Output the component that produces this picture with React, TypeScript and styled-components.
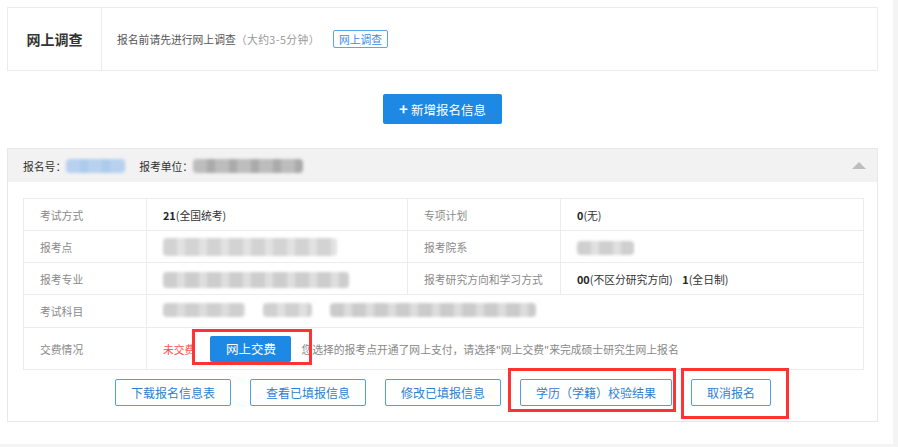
import React from "react";
import styled, { createGlobalStyle } from "styled-components";

const GlobalStyle = createGlobalStyle`
  html, body { margin: 0; padding: 0; background: #f4f4f4; }
  body {
    font-family: "Microsoft YaHei", "Noto Sans CJK SC", "Noto Sans", sans-serif;
    font-size: 10.8px;
    color: #333;
  }
  * { box-sizing: border-box; }
`;

const Page = styled.div`
  width: 893px;
  height: 444px;
  background: #fff;
  padding: 7px 15px 0 7px;
  display: flex;
  flex-direction: column;
`;

const SurveyCard = styled.div`
  height: 64px;
  border: 1px solid #ebebeb;
  display: flex;
`;

const SurveyTitle = styled.div`
  width: 94px;
  border-right: 1px solid #ebebeb;
  display: flex;
  align-items: center;
  justify-content: center;
  font-size: 14px;
  font-weight: bold;
  color: #333;
`;

const SurveyBody = styled.div`
  flex: 1;
  display: flex;
  align-items: center;
  padding-left: 15px;
  color: #555;
`;

const Muted = styled.span`
  color: #999;
  margin-right: 13px;
  letter-spacing: 0.4px;
`;

const OutlineTag = styled.button`
  height: 18px;
  padding: 0 5px;
  font: inherit;
  font-size: 10.8px;
  color: #3a8ee6;
  background: #fff;
  border: 1px solid #5aa5ec;
  border-radius: 2px;
  line-height: 16px;
`;

const AddRow = styled.div`
  display: flex;
  justify-content: center;
  margin-top: 23px;
`;

const AddButton = styled.button`
  width: 119px;
  height: 30px;
  border: none;
  border-radius: 2px;
  background: #1e88e5;
  color: #fff;
  font: inherit;
  font-size: 12.5px;
  display: flex;
  align-items: center;
  justify-content: center;
  gap: 3px;
`;

const Plus = styled.span`
  font-size: 15px;
  font-weight: bold;
  line-height: 1;
  margin-top: -2px;
`;

const Section = styled.div`
  margin-top: 24px;
  border: 1px solid #e8e8e8;
`;

const SectionHeader = styled.div`
  height: 33px;
  background: #f2f2f2;
  display: flex;
  align-items: center;
  padding: 0 11px 0 15px;
  color: #333;
`;

const HeaderLabel = styled.span``;

const HeaderGap = styled.span`
  width: 14px;
`;

const Caret = styled.span`
  margin-left: auto;
  width: 0;
  height: 0;
  border-left: 7px solid transparent;
  border-right: 7px solid transparent;
  border-bottom: 7px solid #bdbdbd;
`;

const Blur = styled.span<{ $w: number; $h?: number; $c: string; $c2?: string }>`
  display: inline-block;
  width: ${(p) => p.$w}px;
  height: ${(p) => p.$h ?? 14}px;
  border-radius: 4px;
  background: repeating-linear-gradient(
    90deg,
    ${(p) => p.$c} 0px,
    ${(p) => p.$c} 14px,
    ${(p) => p.$c2 ?? p.$c} 14px,
    ${(p) => p.$c2 ?? p.$c} 22px
  );
  filter: blur(1.4px);
  vertical-align: middle;
`;

const BlurGroup = styled.span`
  display: inline-flex;
  align-items: center;
  gap: 18px;
`;

const SectionBody = styled.div`
  padding: 16px 14px 15px 15px;
`;

const Table = styled.table`
  width: 840px;
  border-collapse: collapse;
  table-layout: fixed;
`;

const Cell = styled.td<{ $label?: boolean; $h: number }>`
  border: 1px solid #ececec;
  height: ${(p) => p.$h}px;
  padding: 0 16px;
  color: ${(p) => (p.$label ? "#8a8a8a" : "#333")};
  vertical-align: middle;
  white-space: nowrap;
`;

const Num = styled.b`
  font-weight: bold;
  color: #222;
`;

const PayLine = styled.div`
  display: flex;
  align-items: center;
`;

const Unpaid = styled.span`
  color: #ff4d4d;
  margin-right: 15px;
`;

const Marked = styled.span`
  position: relative;
  display: inline-flex;
`;

const Mark = styled.span<{ $t: number; $l: number; $r: number; $b: number }>`
  position: absolute;
  top: ${(p) => p.$t}px;
  left: ${(p) => p.$l}px;
  right: ${(p) => p.$r}px;
  bottom: ${(p) => p.$b}px;
  border: 3px solid #f33;
  pointer-events: none;
`;

const PayButton = styled.button`
  width: 81px;
  height: 26px;
  border: none;
  border-radius: 2px;
  background: #1e88e5;
  color: #fff;
  font: inherit;
  font-size: 12.5px;
`;

const Note = styled.span`
  color: #888;
  margin-left: 10px;
`;

const Actions = styled.div`
  margin-top: 9px;
  display: flex;
  justify-content: center;
  gap: 19px;
`;

const ActionButton = styled.button`
  height: 27px;
  padding: 0 15px;
  background: #fff;
  border: 1px solid #4f9fe8;
  border-radius: 2px;
  color: #2e80d1;
  font: inherit;
  font-size: 12px;
  white-space: nowrap;
`;

export default function App() {
  return (
    <>
      <GlobalStyle />
      <Page>
        <SurveyCard>
          <SurveyTitle>网上调查</SurveyTitle>
          <SurveyBody>
            报名前请先进行网上调查<Muted>（大约3-5分钟）</Muted>
            <OutlineTag>网上调查</OutlineTag>
          </SurveyBody>
        </SurveyCard>

        <AddRow>
          <AddButton>
            <Plus>+</Plus>新增报名信息
          </AddButton>
        </AddRow>

        <Section>
          <SectionHeader>
            <HeaderLabel>报名号：</HeaderLabel>
            <Blur $w={59} $c="#b7d1ef" $c2="#aecbec" />
            <HeaderGap />
            <HeaderLabel>报考单位：</HeaderLabel>
            <Blur $w={110} $c="#bdbdbd" $c2="#aaaaaa" />
            <Caret />
          </SectionHeader>
          <SectionBody>
            <Table>
              <colgroup>
                <col style={{ width: 123 }} />
                <col style={{ width: 261 }} />
                <col style={{ width: 153 }} />
                <col style={{ width: 303 }} />
              </colgroup>
              <tbody>
                <tr>
                  <Cell $label $h={32}>考试方式</Cell>
                  <Cell $h={32}>
                    <Num>21</Num>(全国统考)
                  </Cell>
                  <Cell $label $h={32}>专项计划</Cell>
                  <Cell $h={32}>
                    <Num>0</Num>(无)
                  </Cell>
                </tr>
                <tr>
                  <Cell $label $h={32}>报考点</Cell>
                  <Cell $h={32}>
                    <Blur $w={174} $h={18} $c="#d3d3d3" $c2="#e2e2e2" />
                  </Cell>
                  <Cell $label $h={32}>报考院系</Cell>
                  <Cell $h={32}>
                    <Blur $w={57} $c="#cfcfcf" $c2="#e0e0e0" />
                  </Cell>
                </tr>
                <tr>
                  <Cell $label $h={32}>报考专业</Cell>
                  <Cell $h={32}>
                    <Blur $w={186} $h={16} $c="#cdcdcd" $c2="#dedede" />
                  </Cell>
                  <Cell $label $h={32}>报考研究方向和学习方式</Cell>
                  <Cell $h={32}>
                    <Num>00</Num>(不区分研究方向)&nbsp;&nbsp;&nbsp;&nbsp;<Num>1</Num>(全日制)
                  </Cell>
                </tr>
                <tr>
                  <Cell $label $h={33}>考试科目</Cell>
                  <Cell $h={33} colSpan={3}>
                    <BlurGroup>
                      <Blur $w={82} $c="#cfcfcf" $c2="#dcdcdc" />
                      <Blur $w={49} $c="#d0d0d0" $c2="#e0e0e0" />
                      <Blur $w={206} $c="#cbcbcb" $c2="#dddddd" />
                    </BlurGroup>
                  </Cell>
                </tr>
                <tr>
                  <Cell $label $h={42}>交费情况</Cell>
                  <Cell $h={42} colSpan={3}>
                    <PayLine>
                      <Unpaid>未交费</Unpaid>
                      <Marked>
                        <PayButton>网上交费</PayButton>
                        <Mark $t={-7} $l={-18} $r={-21} $b={-3} />
                      </Marked>
                      <Note>
                        您选择的报考点开通了网上支付，请选择"网上交费"来完成硕士研究生网上报名
                      </Note>
                    </PayLine>
                  </Cell>
                </tr>
              </tbody>
            </Table>
            <Actions>
              <ActionButton>下载报名信息表</ActionButton>
              <ActionButton>查看已填报信息</ActionButton>
              <ActionButton>修改已填报信息</ActionButton>
              <Marked>
                <ActionButton>学历（学籍）校验结果</ActionButton>
                <Mark $t={-11} $l={-12} $r={-4} $b={-6} />
              </Marked>
              <Marked>
                <ActionButton>取消报名</ActionButton>
                <Mark $t={-11} $l={-10} $r={-18} $b={-13} />
              </Marked>
            </Actions>
          </SectionBody>
        </Section>
      </Page>
    </>
  );
}
